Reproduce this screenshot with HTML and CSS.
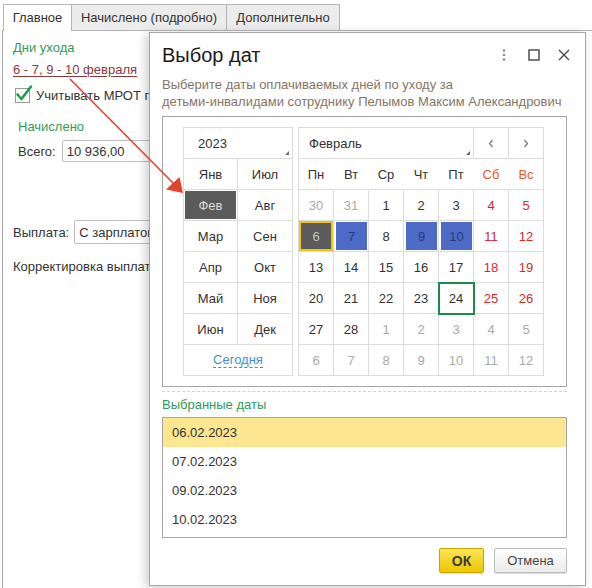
FILE: index.html
```html
<!DOCTYPE html>
<html lang="ru">
<head>
<meta charset="utf-8">
<title>Выбор дат</title>
<link rel="stylesheet" href="styles.css">
</head>
<body>
<div class="page">
  <div class="tabs">
    <div class="tab tab-main active">Главное</div>
    <div class="tab tab-acc">Начислено (подробно)</div>
    <div class="tab tab-add">Дополнительно</div>
  </div>
  <div class="panel">
    <div class="green-label">Дни ухода</div>
    <a class="days-link">6 - 7, 9 - 10 февраля</a>
    <div class="check-row">
      <span class="checkbox">
        <svg class="check" width="18" height="18" viewBox="0 0 18 18"><path d="M2.5 8.5 L6.5 13 L16 0.5" fill="none" stroke="#1f9a4f" stroke-width="2.6" stroke-linecap="round" stroke-linejoin="round"/></svg>
      </span>
      <span class="clip-text">Учитывать МРОТ при расчете</span>
    </div>
    <div class="green-label indent acc-label">Начислено</div>
    <div class="field-row indent total-row">
      <span>Всего:</span>
      <span class="input">10 936,00</span>
    </div>
    <div class="field-row pay-row">
      <span>Выплата:</span>
      <span class="input tall">С зарплатой</span>
    </div>
    <div class="plain corr">Корректировка выплаты</div>
  </div>

  <div class="dialog">
    <div class="dlg-head">
      <div class="dlg-title">Выбор дат</div>
      <div class="dlg-icons">
        <span class="dlg-icon"><svg width="16" height="16" viewBox="0 0 16 16"><circle cx="8" cy="3.5" r="1.3" fill="#8a8a8a"/><circle cx="8" cy="8" r="1.3" fill="#8a8a8a"/><circle cx="8" cy="12.5" r="1.3" fill="#8a8a8a"/></svg></span>
        <span class="dlg-icon"><svg width="16" height="16" viewBox="0 0 16 16"><rect x="3" y="3" width="10" height="10" fill="none" stroke="#333" stroke-width="1.3"/></svg></span>
        <span class="dlg-icon"><svg width="16" height="16" viewBox="0 0 16 16"><path d="M3 3 L13 13 M13 3 L3 13" stroke="#444" stroke-width="1.3"/></svg></span>
      </div>
    </div>
    <div class="dlg-desc">
      <div class="line">Выберите даты оплачиваемых дней по уходу за</div>
      <div class="line">детьми-инвалидами сотруднику Пелымов Максим Александрович</div>
    </div>

    <div class="calbox">
      <div class="months">
        <div class="mc wide year"><span>2023</span><span class="tri"></span></div>
        <div class="mc">Янв</div><div class="mc">Июл</div>
        <div class="mc msel"><span class="msel-fill">Фев</span></div><div class="mc">Авг</div>
        <div class="mc">Мар</div><div class="mc">Сен</div>
        <div class="mc">Апр</div><div class="mc">Окт</div>
        <div class="mc">Май</div><div class="mc">Ноя</div>
        <div class="mc">Июн</div><div class="mc">Дек</div>
        <div class="mc wide"><span class="today-link">Сегодня</span></div>
      </div>
      <div class="days">
        <div class="d hdr-month"><span>Февраль</span><span class="tri"></span></div>
        <div class="d nav"><svg width="6" height="9" viewBox="0 0 6 9"><path d="M4.5 1 L1.5 4.5 L4.5 8" fill="none" stroke="#777" stroke-width="1.2"/></svg></div>
        <div class="d nav"><svg width="6" height="9" viewBox="0 0 6 9"><path d="M1.5 1 L4.5 4.5 L1.5 8" fill="none" stroke="#777" stroke-width="1.2"/></svg></div>

        <div class="d wd">Пн</div><div class="d wd">Вт</div><div class="d wd">Ср</div><div class="d wd">Чт</div><div class="d wd">Пт</div><div class="d wd wdwe">Сб</div><div class="d wd wdwe wdlast">Вс</div>

        <div class="d o">30</div><div class="d o">31</div><div class="d">1</div><div class="d">2</div><div class="d">3</div><div class="d we">4</div><div class="d we">5</div>
        <div class="d cur">6</div><div class="d sel"><span>7</span></div><div class="d">8</div><div class="d sel"><span>9</span></div><div class="d sel"><span>10</span></div><div class="d we">11</div><div class="d we">12</div>
        <div class="d">13</div><div class="d">14</div><div class="d">15</div><div class="d">16</div><div class="d">17</div><div class="d we">18</div><div class="d we">19</div>
        <div class="d">20</div><div class="d">21</div><div class="d">22</div><div class="d">23</div><div class="d today">24</div><div class="d we">25</div><div class="d we">26</div>
        <div class="d">27</div><div class="d">28</div><div class="d o">1</div><div class="d o">2</div><div class="d o">3</div><div class="d o">4</div><div class="d o">5</div>
        <div class="d o">6</div><div class="d o">7</div><div class="d o">8</div><div class="d o">9</div><div class="d o">10</div><div class="d o">11</div><div class="d o">12</div>
      </div>
    </div>

    <div class="sep"></div>
    <div class="green-label sel-label">Выбранные даты</div>
    <div class="list">
      <div class="row active-row">06.02.2023</div>
      <div class="row">07.02.2023</div>
      <div class="row">09.02.2023</div>
      <div class="row">10.02.2023</div>
    </div>
    <div class="buttons">
      <button class="btn ok">ОК</button>
      <button class="btn cancel">Отмена</button>
    </div>
  </div>

  <svg class="arrow" width="592" height="588" viewBox="0 0 592 588">
    <line x1="70" y1="79" x2="175" y2="185" stroke="#e0442f" stroke-width="1.6"/>
    <polygon points="183,193 166,189.5 179.5,177" fill="#e0442f"/>
  </svg>
</div>
</body>
</html>
```

FILE: styles.css
```css
* { box-sizing: border-box; margin: 0; padding: 0; }
html, body { width: 592px; height: 588px; overflow: hidden; }
body {
  background: #fff;
  font-family: "Liberation Sans", Arial, sans-serif;
  font-size: 13px;
  color: #333;
}
.page { position: relative; width: 592px; height: 588px; }

/* tabs */
.tabs {
  display: flex;
  align-items: flex-end;
  height: 30px;
  padding-left: 3px;
}
.tab {
  height: 26px;
  line-height: 25px;
  border: 1px solid #b4b4b4;
  border-bottom: none;
  background: #ececec;
  color: #333;
  text-align: center;
  margin-left: -1px;
}
.tab-main { width: 69px; margin-left: 0; }
.tab-acc { width: 156px; }
.tab-add { width: 114px; }
.tab.active {
  background: #fff;
  height: 27px;
  margin-bottom: -1px;
  position: relative;
  z-index: 1;
}

/* underlying panel */
.panel {
  margin-left: 2px;
  height: 558px;
  border-top: 1px solid #b4b4b4;
  border-left: 1px solid #a8a8a8;
  padding-left: 10px;
  overflow: hidden;
}
.green-label { color: #2f9b5b; line-height: 16px; }
.panel > .green-label:first-child { margin-top: 9px; }
.days-link {
  display: inline-block;
  margin-top: 6px;
  line-height: 16px;
  color: #8b3a3a;
  text-decoration: underline;
  text-underline-offset: 2px;
}
.check-row {
  display: flex;
  align-items: center;
  gap: 6px;
  margin-top: 9px;
  height: 16px;
  margin-left: 2px;
  width: 134px;
  white-space: nowrap;
}
.clip-text { overflow: hidden; flex: 1; min-width: 0; }
.checkbox {
  width: 15px;
  height: 15px;
  flex: none;
  border: 1px solid #9a9a9a;
  background: #fff;
  display: block;
  overflow: visible;
}
.check { display: block; margin: -3px 0 0 -1px; overflow: visible; }
.indent { padding-left: 5px; }
.acc-label { margin-top: 16px; }
.field-row {
  display: flex;
  align-items: center;
  gap: 6px;
  white-space: nowrap;
  width: 136px;
  overflow: hidden;
}
.total-row { margin-top: 5px; }
.pay-row { margin-top: 58px; gap: 5px; }
.input {
  display: flex;
  align-items: center;
  flex: none;
  height: 22px;
  width: 160px;
  padding: 0 4px;
  border: 1px solid #bdbdbd;
  border-radius: 2px;
  background: #fff;
}
.input.tall { height: 24px; }
.plain { line-height: 16px; white-space: nowrap; width: 136px; overflow: hidden; }
.corr { margin-top: 15px; }

/* dialog */
.dialog {
  position: absolute;
  left: 149px;
  top: 32px;
  width: 437px;
  height: 554px;
  background: #fff;
  border: 1px solid #a6a6a6;
  box-shadow: -3px 2px 10px rgba(0, 0, 0, 0.2);
  padding: 10px 18px 0 12px;
  display: flex;
  flex-direction: column;
  z-index: 2;
}
.dlg-head {
  display: flex;
  align-items: center;
  height: 24px;
  margin-right: -5px;
}
.dlg-title { flex: 1; font-size: 20px; color: #1a1a1a; line-height: 24px; }
.dlg-icons { display: flex; gap: 14px; }
.dlg-icon { width: 16px; height: 16px; display: block; }
.dlg-icon svg { display: block; }
.dlg-desc { margin-top: 9px; line-height: 17px; color: #857565; }
.dlg-desc .line { white-space: nowrap; }

.calbox {
  margin-top: 6px;
  border: 1px solid #a6a6a6;
  padding: 10px 21px 10px 20px;
  display: flex;
  gap: 5px;
}
.months {
  display: grid;
  grid-template-columns: 54px 55px;
  grid-auto-rows: 31px;
  border-top: 1px solid #dcdcdc;
  border-left: 1px solid #dcdcdc;
  align-self: flex-start;
}
.mc {
  border-right: 1px solid #dcdcdc;
  border-bottom: 1px solid #dcdcdc;
  display: flex;
  align-items: center;
  justify-content: center;
}
.mc.wide { grid-column: span 2; }
.year { justify-content: space-between; padding-left: 14px; }
.tri {
  align-self: flex-end;
  width: 0;
  height: 0;
  border-left: 4px solid transparent;
  border-bottom: 4px solid #6a6a6a;
  margin: 0 3px 3px 0;
}
.msel { padding: 1px; }
.msel-fill {
  width: 100%;
  height: 100%;
  background: #5b5b5b;
  color: #dadada;
  display: flex;
  align-items: center;
  justify-content: center;
}
.today-link {
  color: #3d8fd1;
  border-bottom: 1px dashed #3d8fd1;
  line-height: 15px;
}

.days {
  display: grid;
  grid-template-columns: repeat(7, 35px);
  grid-auto-rows: 31px;
  border-top: 1px solid #dcdcdc;
  border-left: 1px solid #dcdcdc;
}
.d {
  border-right: 1px solid #dcdcdc;
  border-bottom: 1px solid #dcdcdc;
  display: flex;
  align-items: center;
  justify-content: center;
  color: #333;
}
.hdr-month {
  grid-column: span 5;
  justify-content: space-between;
  padding-left: 10px;
}
.wd { border-right-color: transparent; }
.wd.wdlast { border-right-color: #dcdcdc; }
.wdwe { color: #e2572b; }
.we { color: #d32a2a; }
.o { color: #a9a9a9; }
.cur {
  background: #5b5b5b;
  color: #c4c4c4;
  box-shadow: inset 0 0 0 2px #f0c419;
}
.sel { padding: 1px 1px 1px 2px; }
.sel span {
  width: 100%;
  height: 100%;
  background: #4e6ac7;
  color: #2b3a7a;
  display: flex;
  align-items: center;
  justify-content: center;
}
.today {
  position: relative;
  z-index: 1;
  outline: 2px solid #1b8a4c;
  outline-offset: -1px;
}

.sep { margin-top: 4px; border-top: 1px dashed #d2d2d2; }
.sel-label { margin-top: 5px; }
.list {
  margin-top: 4px;
  height: 121px;
  border: 1px solid #a6a6a6;
}
.row {
  height: 29px;
  line-height: 29px;
  padding-left: 9px;
  color: #333;
}
.active-row { background: #fde690; }
.buttons {
  margin-top: 10px;
  display: flex;
  justify-content: flex-end;
  gap: 10px;
}
.btn {
  height: 25px;
  font-family: "Liberation Sans", Arial, sans-serif;
  font-size: 13px;
  border-radius: 2px;
  box-shadow: 0 1px 1px rgba(0, 0, 0, 0.15);
}
.ok {
  width: 45px;
  background: linear-gradient(#fbe555, #eec500);
  border: 1px solid #c8a600;
  font-weight: bold;
  font-size: 14px;
  color: #3a3a3a;
}
.cancel {
  width: 73px;
  background: linear-gradient(#ffffff, #ebebeb);
  border: 1px solid #bcbcbc;
  color: #444;
}

.arrow {
  position: absolute;
  left: 0;
  top: 0;
  z-index: 3;
  pointer-events: none;
}
```
